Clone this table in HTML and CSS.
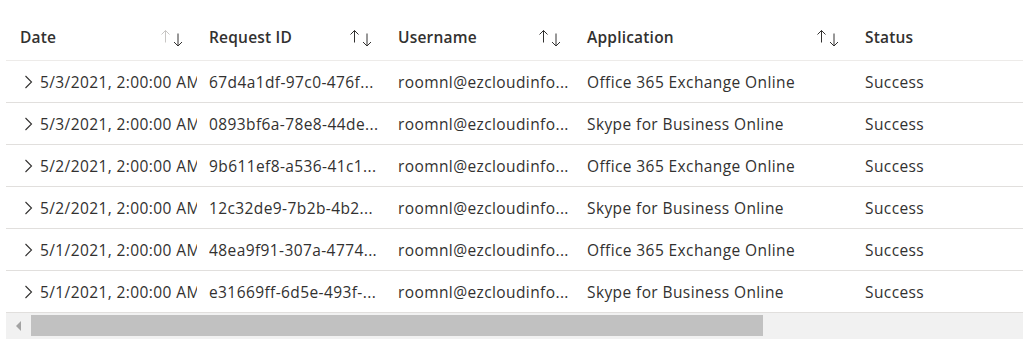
FILE: index.html
```html
<!DOCTYPE html>
<html lang="en">
<head>
    <meta charset="UTF-8">
    <title>Sign-ins</title>
    <link rel="stylesheet" href="styles.css">
</head>
<body>
    <div class="grid-wrap">
        <div class="grid-row grid-header">
            <div class="cell head">
                <span class="head-title">Date</span>
                <svg class="sort-icon" width="22" height="17" viewBox="0 0 22 17">
                    <g fill="none" stroke-width="1">
                        <path class="up faded" d="M4.5 0.5v12M0.5 4.5l4-4 4 4"/>
                        <path class="down" d="M17 3.5v12.5M13 12l4 4 4-4"/>
                    </g>
                </svg>
            </div>
            <div class="cell head">
                <span class="head-title">Request ID</span>
                <svg class="sort-icon" width="22" height="17" viewBox="0 0 22 17">
                    <g fill="none" stroke-width="1">
                        <path class="up" d="M4.5 0.5v12M0.5 4.5l4-4 4 4"/>
                        <path class="down" d="M17 3.5v12.5M13 12l4 4 4-4"/>
                    </g>
                </svg>
            </div>
            <div class="cell head">
                <span class="head-title">Username</span>
                <svg class="sort-icon" width="22" height="17" viewBox="0 0 22 17">
                    <g fill="none" stroke-width="1">
                        <path class="up" d="M4.5 0.5v12M0.5 4.5l4-4 4 4"/>
                        <path class="down" d="M17 3.5v12.5M13 12l4 4 4-4"/>
                    </g>
                </svg>
            </div>
            <div class="cell head">
                <span class="head-title">Application</span>
                <svg class="sort-icon" width="22" height="17" viewBox="0 0 22 17">
                    <g fill="none" stroke-width="1">
                        <path class="up" d="M4.5 0.5v12M0.5 4.5l4-4 4 4"/>
                        <path class="down" d="M17 3.5v12.5M13 12l4 4 4-4"/>
                    </g>
                </svg>
            </div>
            <div class="cell head">
                <span class="head-title">Status</span>
            </div>
        </div>

        <div class="grid-row">
            <div class="cell date-cell">
                <svg class="chevron" width="16" height="16" viewBox="0 0 16 16"><path d="M5.5 2l6 6-6 6" fill="none"/></svg>
                <span class="clip">5/3/2021, 2:00:00 AM</span>
            </div>
            <div class="cell"><span class="ellipsis">67d4a1df-97c0-476f...</span></div>
            <div class="cell"><span class="ellipsis">roomnl@ezcloudinfo...</span></div>
            <div class="cell"><span class="ellipsis">Office 365 Exchange Online</span></div>
            <div class="cell"><span class="ellipsis">Success</span></div>
        </div>
        <div class="grid-row">
            <div class="cell date-cell">
                <svg class="chevron" width="16" height="16" viewBox="0 0 16 16"><path d="M5.5 2l6 6-6 6" fill="none"/></svg>
                <span class="clip">5/3/2021, 2:00:00 AM</span>
            </div>
            <div class="cell"><span class="ellipsis">0893bf6a-78e8-44de...</span></div>
            <div class="cell"><span class="ellipsis">roomnl@ezcloudinfo...</span></div>
            <div class="cell"><span class="ellipsis">Skype for Business Online</span></div>
            <div class="cell"><span class="ellipsis">Success</span></div>
        </div>
        <div class="grid-row">
            <div class="cell date-cell">
                <svg class="chevron" width="16" height="16" viewBox="0 0 16 16"><path d="M5.5 2l6 6-6 6" fill="none"/></svg>
                <span class="clip">5/2/2021, 2:00:00 AM</span>
            </div>
            <div class="cell"><span class="ellipsis">9b611ef8-a536-41c1...</span></div>
            <div class="cell"><span class="ellipsis">roomnl@ezcloudinfo...</span></div>
            <div class="cell"><span class="ellipsis">Office 365 Exchange Online</span></div>
            <div class="cell"><span class="ellipsis">Success</span></div>
        </div>
        <div class="grid-row">
            <div class="cell date-cell">
                <svg class="chevron" width="16" height="16" viewBox="0 0 16 16"><path d="M5.5 2l6 6-6 6" fill="none"/></svg>
                <span class="clip">5/2/2021, 2:00:00 AM</span>
            </div>
            <div class="cell"><span class="ellipsis">12c32de9-7b2b-4b2...</span></div>
            <div class="cell"><span class="ellipsis">roomnl@ezcloudinfo...</span></div>
            <div class="cell"><span class="ellipsis">Skype for Business Online</span></div>
            <div class="cell"><span class="ellipsis">Success</span></div>
        </div>
        <div class="grid-row">
            <div class="cell date-cell">
                <svg class="chevron" width="16" height="16" viewBox="0 0 16 16"><path d="M5.5 2l6 6-6 6" fill="none"/></svg>
                <span class="clip">5/1/2021, 2:00:00 AM</span>
            </div>
            <div class="cell"><span class="ellipsis">48ea9f91-307a-4774...</span></div>
            <div class="cell"><span class="ellipsis">roomnl@ezcloudinfo...</span></div>
            <div class="cell"><span class="ellipsis">Office 365 Exchange Online</span></div>
            <div class="cell"><span class="ellipsis">Success</span></div>
        </div>
        <div class="grid-row">
            <div class="cell date-cell">
                <svg class="chevron" width="16" height="16" viewBox="0 0 16 16"><path d="M5.5 2l6 6-6 6" fill="none"/></svg>
                <span class="clip">5/1/2021, 2:00:00 AM</span>
            </div>
            <div class="cell"><span class="ellipsis">e31669ff-6d5e-493f-...</span></div>
            <div class="cell"><span class="ellipsis">roomnl@ezcloudinfo...</span></div>
            <div class="cell"><span class="ellipsis">Skype for Business Online</span></div>
            <div class="cell"><span class="ellipsis">Success</span></div>
        </div>

        <div class="scrollbar">
            <div class="scroll-btn">
                <svg width="6" height="10" viewBox="0 0 6 10"><path d="M5 0v10L0 5z" fill="#a3a3a3"/></svg>
            </div>
            <div class="scroll-track">
                <div class="scroll-thumb"></div>
            </div>
        </div>
    </div>
</body>
</html>
```

FILE: styles.css
```css
body {
    margin: 0;
    background: #ffffff;
    font-family: "Open Sans", "Noto Sans", sans-serif;
    font-size: 15.5px;
    letter-spacing: 0.4px;
    color: #323130;
}

.grid-wrap {
    margin-left: 6px;
    overflow: hidden;
}

.grid-row {
    display: grid;
    grid-template-columns: 191px 189px 189px 278px 1fr;
    height: 42px;
    border-bottom: 1px solid #e1dfdd;
    box-sizing: border-box;
}

.grid-header {
    height: 61px;
    padding-top: 13px;
    border-bottom-color: #edebe9;
}

.cell {
    display: flex;
    align-items: center;
    padding: 0 2px 0 12px;
    min-width: 0;
    white-space: nowrap;
}

.cell:first-child {
    padding-left: 14px;
}

.head {
    justify-content: space-between;
    padding-right: 14px;
    font-weight: 600;
    letter-spacing: 0.2px;
}

.sort-icon {
    flex: none;
    margin-top: 3px;
    stroke: #323130;
}

.sort-icon .faded {
    stroke: #c8c6c4;
}

.ellipsis {
    overflow: hidden;
    text-overflow: ellipsis;
}

.date-cell {
    padding-right: 0;
    overflow: hidden;
}

.chevron {
    flex: none;
    margin-right: 4px;
    stroke: #323130;
    stroke-width: 1.1;
}

.clip {
    overflow: hidden;
}

.scrollbar {
    display: flex;
    height: 26px;
    background: #f1f1f1;
}

.scroll-btn {
    width: 25px;
    display: flex;
    align-items: center;
    justify-content: center;
}

.scroll-track {
    flex: 1;
    padding: 2px 0 3px;
}

.scroll-thumb {
    width: 732px;
    height: 100%;
    background: #c1c1c1;
}
```
